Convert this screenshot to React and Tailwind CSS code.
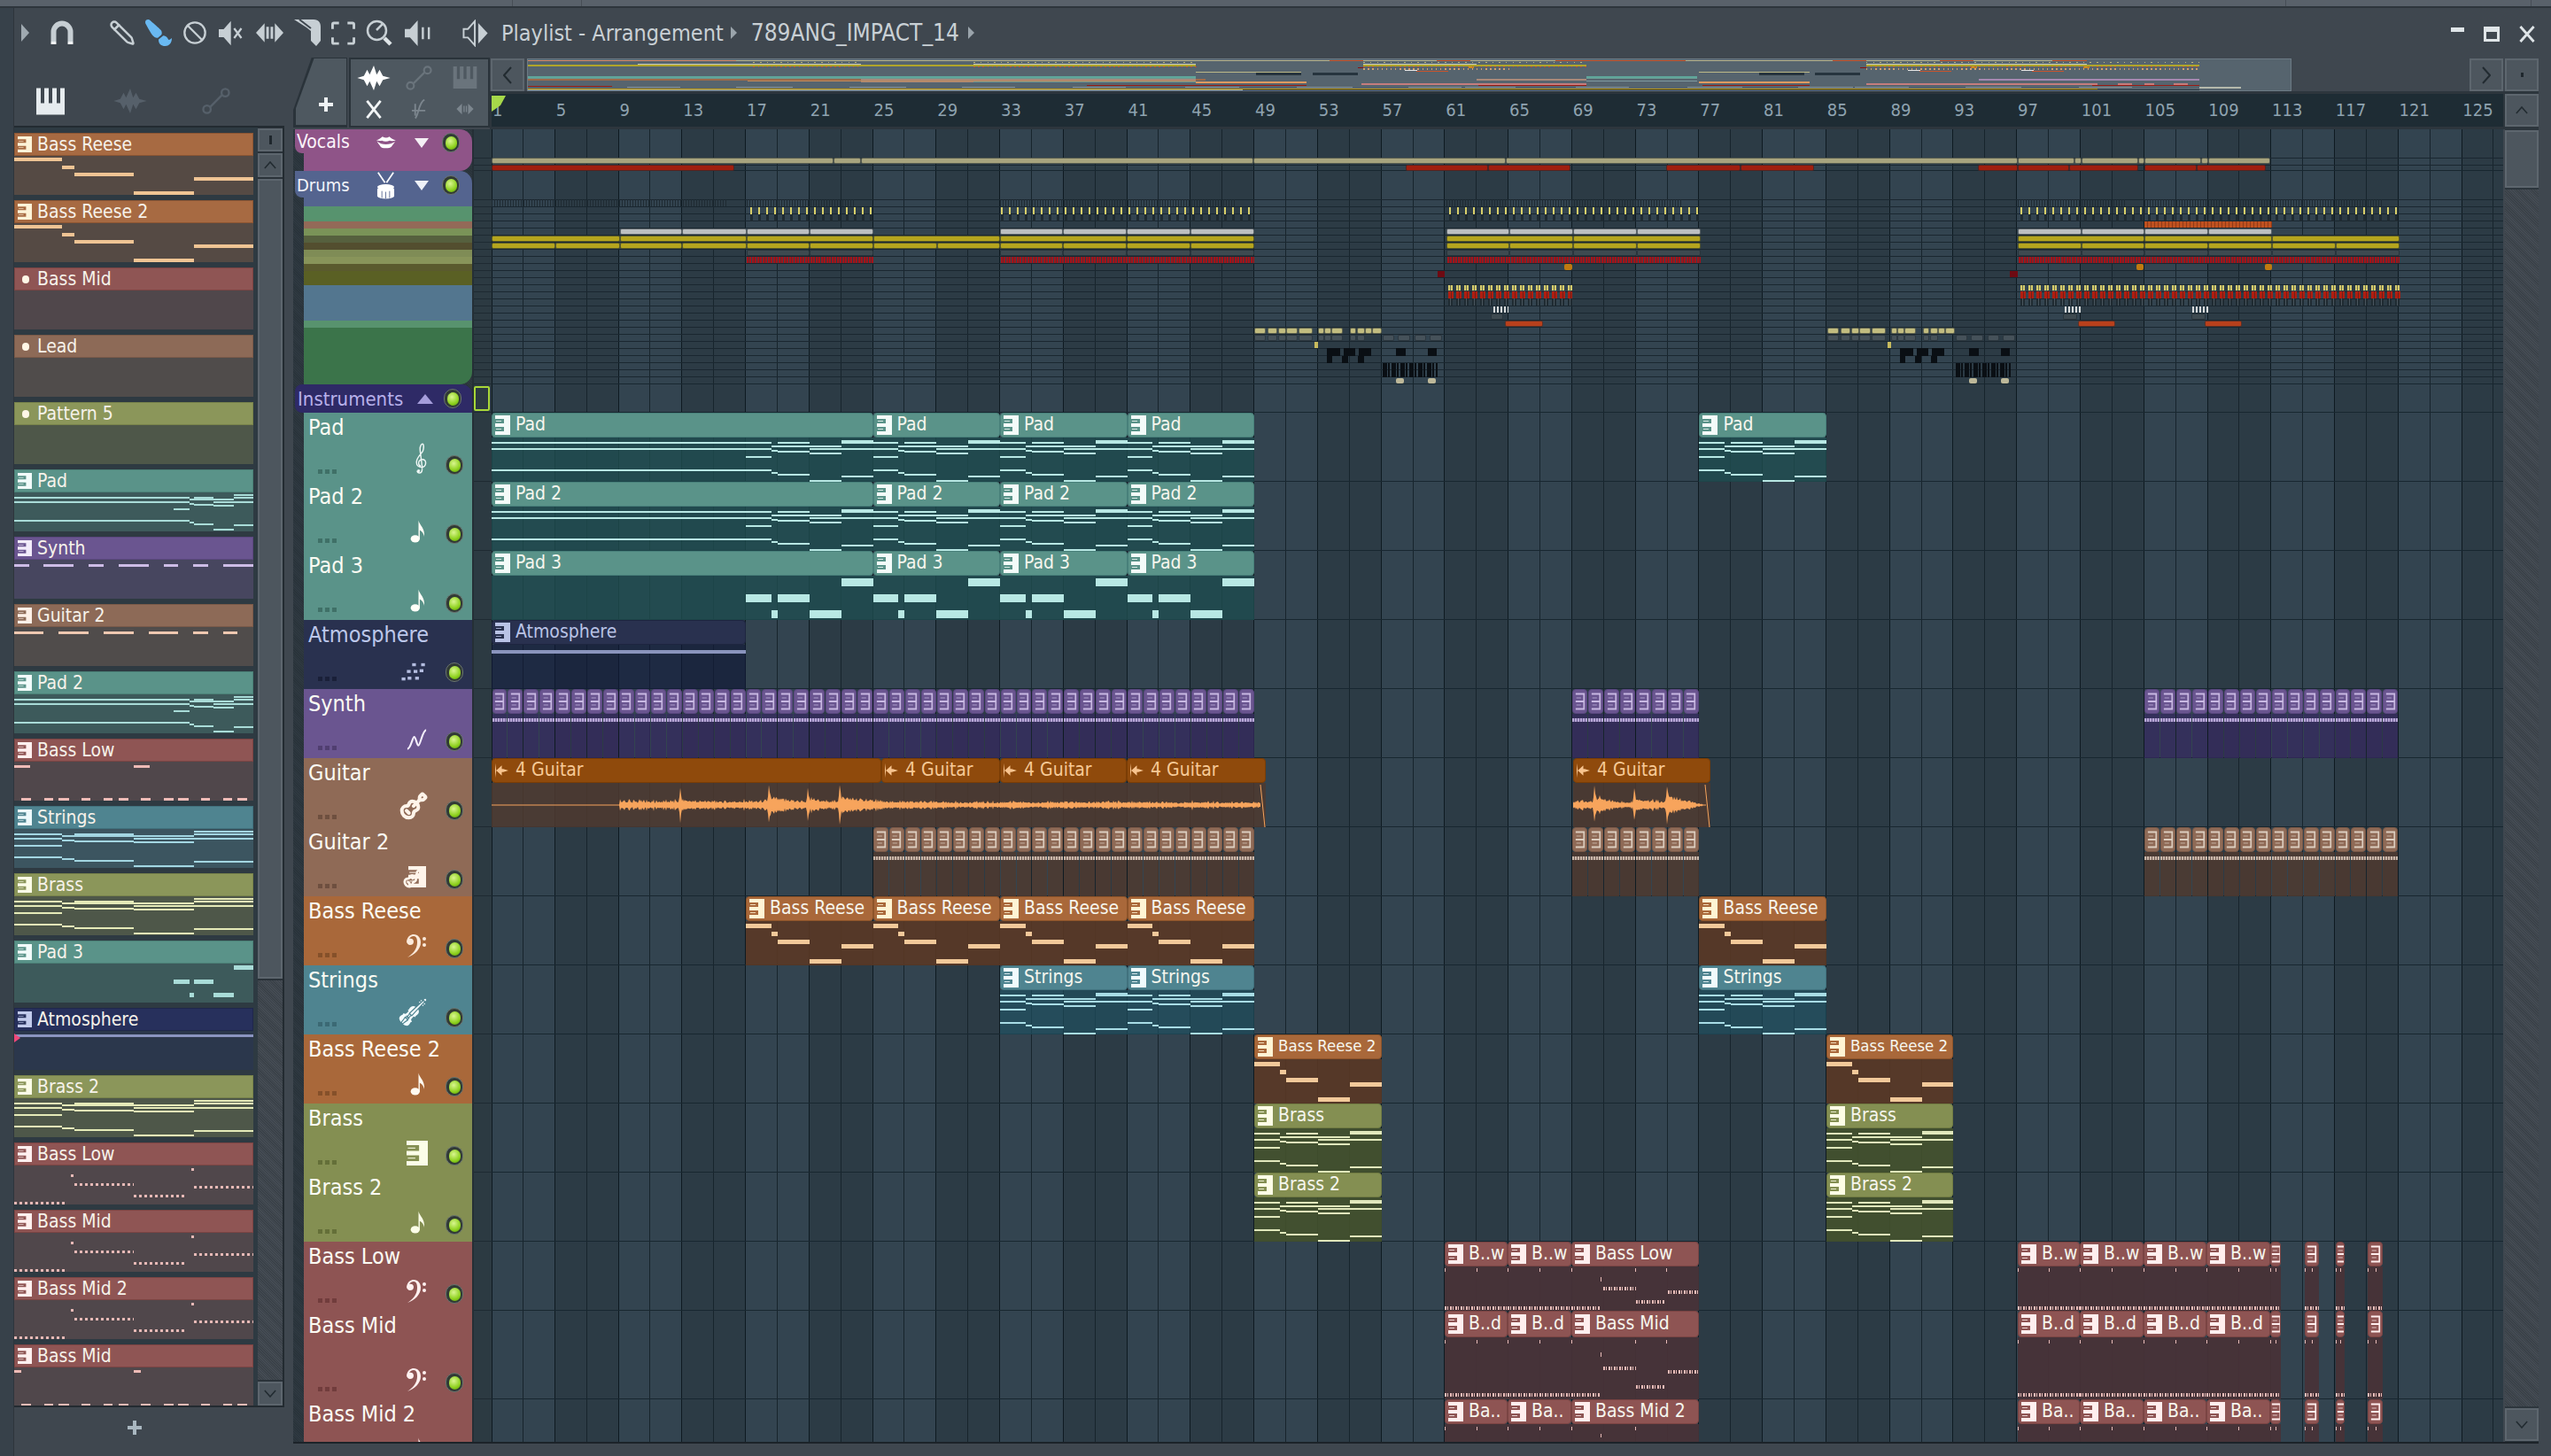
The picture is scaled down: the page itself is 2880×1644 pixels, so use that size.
import React from "react";
import { Pencil, Ban, Guitar } from "lucide-react";
import { FaPaintBrush } from "react-icons/fa";
import { GiViolin, GiLips } from "react-icons/gi";

const BAR = 17.94;
const X0 = 555;
const Y0 = 146;
const bx = (b) => X0 + (b - 1) * BAR;

/* ---------- icons ---------- */
const PianoGlyph = ({ className = "" }) => (
  <svg viewBox="0 0 17 22" className={className} preserveAspectRatio="none">
    <path fill="currentColor" d="M0 0H17V22H0V18H10V13H0V9H10V4H0Z" />
    <path fill="currentColor" opacity=".8" d="M1 6h6v1H1zM1 15h6v1H1z" />
  </svg>
);
const TinyGlyph = ({ className = "" }) => (
  <svg viewBox="0 0 14 22" className={className} preserveAspectRatio="none">
    <path fill="currentColor" d="M1 1.500H13V20.500H1V18.500H11V12H1V10H11V3.500H1Z" />
    <path fill="currentColor" opacity=".7" d="M2 6.500h6v1H2zM2 14.500h6v1H2z" />
  </svg>
);
const EighthNote = ({ className = "" }) => (
  <svg viewBox="0 0 20 30" className={className}>
    <ellipse cx="6" cy="24" rx="5.500" ry="4.500" fill="currentColor" />
    <path d="M10 24V1.500c1 6 8 9 7 20-1-5-4-7-5.500-8V24z" fill="currentColor" />
  </svg>
);
const BassClef = ({ className = "" }) => (
  <svg viewBox="0 0 26 28" className={className}>
    <path d="M2 9C3 3 7 1 10 1c5 0 8 4 8 9 0 8-7 14-15 17 6-4 11-9 11-17 0-4-1-7-4-7-2 0-4 1-5 3 2-1 5 0 5 3s-2 4-4 4-4-2-4-4z" fill="currentColor" />
    <circle cx="22" cy="6" r="2" fill="currentColor" />
    <circle cx="22" cy="13" r="2" fill="currentColor" />
  </svg>
);
const TrebleClef = ({ className = "" }) => (
  <svg viewBox="0 0 20 44" className={className} fill="none" stroke="currentColor" strokeWidth="1.800">
    <path d="M12 36C12 30 9 12 9 8s2-7 3.500-7S15 6 13 11c-2 4-9 9-9 16 0 5 4 7 7 7s6-2 6-6-3-5-5-5-5 2-5 5 2 4 3 4" />
    <path d="M12 36c0 4-1 6-4 6-2 0-3-1-3-3" />
    <circle cx="7" cy="39" r="2" fill="currentColor" stroke="none" />
  </svg>
);
const AtmoIcon = ({ className = "" }) => (
  <svg viewBox="0 0 32 26" className={className} fill="currentColor">
    <rect x="8" y="19" width="5" height="4" /><rect x="0" y="20" width="5" height="4" />
    <rect x="18" y="19" width="5" height="4" /><rect x="7" y="10" width="5" height="4" />
    <rect x="16" y="10" width="5" height="4" /><rect x="24" y="9" width="5" height="4" />
    <rect x="14" y="1" width="5" height="4" /><rect x="26" y="1" width="5" height="4" />
  </svg>
);
const SynthIcon = ({ className = "" }) => (
  <svg viewBox="0 0 26 26" className={className} fill="none" stroke="currentColor" strokeWidth="2.200">
    <path d="M2 24C6 24 8 10 10 10s3 10 5 10 5-18 9-18" />
  </svg>
);
const Wave = ({ className = "", color = "#ffffff" }) => (
  <svg viewBox="0 0 40 30" className={className}>
    <path fill={color} d="M0 15 8 12.500 12 5 15 11 20 0 23.500 11 27 5 31 12.500 40 15 31 17.500 27 25 23.500 19 20 30 15 19 12 25 8 17.500Z" />
  </svg>
);
const AutoIcon = ({ className = "" }) => (
  <svg viewBox="0 0 34 32" className={className} fill="none" stroke="currentColor" strokeWidth="2.500">
    <circle cx="6" cy="26" r="4.500" /><circle cx="28" cy="6" r="4.500" /><path d="M10 23 24 9" />
  </svg>
);
const PianoIcon = ({ className = "" }) => (
  <svg viewBox="0 0 32 30" className={className}>
    <path fill="currentColor" d="M0 0H32V30H0ZM5 0V17H9V0ZM14 0V17H18V0ZM23 0V17H27V0Z" fillRule="evenodd" />
  </svg>
);
const Speaker = ({ className = "", x, bars }) => (
  <svg viewBox="0 0 34 32" className={className} fill="currentColor">
    <path d="M0 11h6L15 1v30L6 21H0z" />
    {x && <path d="M19 10l9 12M28 10l-9 12" stroke="currentColor" strokeWidth="2.500" />}
    {bars && <path d="M21 9v14M28 9v14" stroke="currentColor" strokeWidth="2.500" />}
  </svg>
);

const TopIcons = () => (
  <>
    <svg viewBox="0 0 9 20" className="w-[9px] h-[20px] text-[#9fa9b0] ml-[8px]"><path fill="currentColor" d="M0 0 9 10 0 20Z" /></svg>
    <svg viewBox="0 0 28 28" className="w-[28px] h-[28px] ml-[23px] text-[#c7cfd4]">
      <path d="M4.500 24V13a9.500 9.500 0 0 1 19 0v11" fill="none" stroke="currentColor" strokeWidth="6" />
      <path d="M1.500 24h6v3h-6zM20.500 24h6v3h-6z" fill="#f2f5f6" />
    </svg>
    <Pencil className="w-[30px] h-[30px] ml-[39px] text-[#c7cfd4] -scale-x-100" strokeWidth={2} />
    <FaPaintBrush className="w-[30px] h-[30px] ml-[11px] text-[#69b9f2] -scale-x-100" />
    <Ban className="w-[28px] h-[28px] ml-[12px] text-[#c7cfd4]" strokeWidth={2} />
    <Speaker x className="w-[31px] h-[31px] ml-[13px] text-[#c7cfd4]" />
    <svg viewBox="0 0 32 28" className="w-[31px] h-[28px] ml-[11px] text-[#c7cfd4]">
      <path fill="currentColor" d="M0 14 10 3v22ZM32 14 22 3v22ZM12 7h3v14h-3ZM17 7h3v14h-3Z" />
    </svg>
    <svg viewBox="0 0 30 30" className="w-[30px] h-[30px] ml-[12px] text-[#c7cfd4]">
      <path fill="currentColor" d="M0 0H22C28 0 30 4 30 8V24L25 30 19 24V13L14 9 0 0ZM5 0 19 10" />
      <path d="M6 0 19 10" stroke="#3f474f" strokeWidth="2" />
    </svg>
    <svg viewBox="0 0 28 28" className="w-[27px] h-[27px] ml-[12px] text-[#c7cfd4]" fill="none" stroke="currentColor" strokeWidth="3">
      <path d="M9 2H3a1.500 1.500 0 0 0-1.500 1.500V9M19 2h6a1.500 1.500 0 0 1 1.500 1.500V9M9 26H3a1.500 1.500 0 0 1-1.500-1.500V19M19 26h6a1.500 1.500 0 0 0 1.500-1.500V19" />
    </svg>
    <svg viewBox="0 0 30 30" className="w-[30px] h-[30px] ml-[12px] text-[#c7cfd4]" fill="none" stroke="currentColor">
      <circle cx="12.500" cy="12.500" r="10.500" strokeWidth="2.500" />
      <path d="M12 12 19 5" strokeWidth="2.500" /><path d="M21 21 28 28" strokeWidth="4.500" stroke="#dfe5e8" />
    </svg>
    <Speaker bars className="w-[33px] h-[31px] ml-[14px] text-[#c7cfd4]" />
    <svg viewBox="0 0 30 32" className="w-[30px] h-[31px] ml-[32px] text-[#c7cfd4]" fill="none" stroke="currentColor" strokeWidth="2">
      <path d="M1 11h5L14 2v28L6 21H1z" /><path fill="currentColor" stroke="none" d="M18 4 29 16 18 28Z" />
    </svg>
  </>
);

const Led = ({ className = "" }) => (
  <div className={"w-[20px] h-[22px] rounded-full bg-[#313a35] border border-[#6a7470] flex items-center justify-center shrink-0 " + className}>
    <div className="w-[13px] h-[15px] rounded-full bg-[radial-gradient(circle_at_40%_35%,#d9f58f,#8ed11e_60%,#4f8f0c)]" />
  </div>
);

/* ---------- note patterns ---------- */
const padSeg = [
  [0, 1.6, [5.3, 12, 21, 36]],
  [1.6, 2, [8.7, 14.3, 39.3]],
  [2, 4, [5.3, 8.7, 15.3, 41.3]],
  [4, 6, [8.7, 12, 17, 47.7]],
  [6, 8, [2.7, 5.3, 12, 42.7]],
];
const pad8 = padSeg.flatMap(([a, b, ys]) => ys.map((y) => [a / 8, b / 8, y]));
const pad24 = [
  ...[5.3, 12, 36].map((y) => [0, 16 / 24, y]),
  ...padSeg.flatMap(([a, b, ys]) => ys.map((y) => [(16 + a) / 24, (16 + b) / 24, y])),
];
const reese8 = [[0, 0.2, 2.7], [0.2, 0.25, 11.7], [0.25, 0.5, 21], [0.5, 0.75, 43.3], [0.75, 1, 25.7]];
const pad3_8 = [[0, 0.2, 20.7], [0.25, 0.5, 20.7], [0.2, 0.25, 39], [0.5, 0.75, 39], [0.75, 1, 2.7]];
const pad3_24 = pad3_8.map(([a, b, y]) => [(16 + a * 8) / 24, (16 + b * 8) / 24, y]);

const Notes = ({ notes, h = 2, color = "bg-[#b8e8e4]", k = 1 }) => (
  <>
    {notes.map(([a, b, y], i) => (
      <div key={i} className={"absolute " + color} style={{ left: a * 100 + "%", width: (b - a) * 100 + "%", top: Math.round(y * k), height: h }} />
    ))}
  </>
);

/* ---------- picker ---------- */
const P = {
  reese: ["bg-[#a76a42] border-[#8b5533]", "bg-[#554a44]", "bg-[#efc494]", "text-[#fdf3d8]"],
  mid: ["bg-[#8f5554] border-[#7c4443]", "bg-[#50474b]", "bg-[#eebbb6]", "text-[#fff0ef]"],
  lead: ["bg-[#8d6a57] border-[#7a5a49]", "bg-[#504c4b]", "bg-[#efc8b0]", "text-[#fdf0e8]"],
  olive: ["bg-[#8b965a] border-[#78834b]", "bg-[#4e5749]", "bg-[#e5eab8]", "text-[#fbfce8]"],
  pad: ["bg-[#5a9389] border-[#4b8177]", "bg-[#3d5a5b]", "bg-[#a9dcd8]", "text-[#f1fbfa]"],
  synth: ["bg-[#6a5590] border-[#5b477e]", "bg-[#47465f]", "bg-[#cdbce6]", "text-[#f2ecfb]"],
  str: ["bg-[#4f8490] border-[#41727e]", "bg-[#3c5560]", "bg-[#a3d6e2]", "text-[#edf9fc]"],
  atm: ["bg-[#27305c] border-[#1f274c]", "bg-[#2b374c]", "bg-[#8a94c0]", "text-[#c2cbec]"],
};
const dots = "bg-[repeating-linear-gradient(90deg,#e6b9b6_0_3px,transparent_3px_6px)]";
const synthMini = [[0, .063], [.124, .25], [.31, .375], [.437, .562], [.625, .687], [.749, .81], [.873, 1]].map(([a, b]) => [a, b, 5]);
const guitMini = [[0, .124], [.187, .31], [.375, .5], [.562, .687], [.749, .81], [.873, .935]].map(([a, b]) => [a, b, 5]);
const lowMini = [[.03, .07], [.125, .163], [.187, .23], [.28, .318], [.374, .41], [.437, .476], [.53, .57], [.626, .666], [.687, .73], [.78, .818], [.873, .91], [.935, .975]].map(([a, b]) => [a, b, 41]);
const bassMini = [
  [0, .217, 41], [.237, .25, 10], [.25, .5, 20], [.5, .72, 33], [.742, .755, 3], [.75, 1, 23],
];

const pickerItems = [
  { n: "Bass Reese", t: P.reese, notes: reese8.map(([a, b, y]) => [a, b, y * 0.92]), h: 4 },
  { n: "Bass Reese 2", t: P.reese, notes: reese8.map(([a, b, y]) => [a, b, y * 0.92]), h: 4 },
  { n: "Bass Mid", t: P.mid, dot: 1 },
  { n: "Lead", t: P.lead, dot: 1 },
  { n: "Pattern 5", t: P.olive, dot: 1 },
  { n: "Pad", t: P.pad, notes: pad24.map(([a, b, y]) => [a, b, y * 0.85]) },
  { n: "Synth", t: P.synth, notes: synthMini, h: 3 },
  { n: "Guitar 2", t: P.lead, notes: guitMini, h: 3 },
  { n: "Pad 2", t: P.pad, notes: pad24.map(([a, b, y]) => [a, b, y * 0.85]) },
  { n: "Bass Low", t: P.mid, notes: [...lowMini, [0, .065, 4], [.5, .565, 4]], h: 3 },
  { n: "Strings", t: P.str, notes: pad8.map(([a, b, y]) => [a, b, y * 0.85]) },
  { n: "Brass", t: P.olive, notes: pad8.map(([a, b, y]) => [a, b, y * 0.85]) },
  { n: "Pad 3", t: P.pad, notes: pad3_24.map(([a, b, y]) => [a, b, y * 0.85]), h: 5 },
  { n: "Atmosphere", t: P.atm, notes: [[0, 1, 4]], h: 3, flag: 1 },
  { n: "Brass 2", t: P.olive, notes: pad8.map(([a, b, y]) => [a, b, y * 0.85]) },
  { n: "Bass Low", t: P.mid, dotted: 1 },
  { n: "Bass Mid", t: P.mid, dotted: 1 },
  { n: "Bass Mid 2", t: P.mid, dotted: 1 },
  { n: "Bass Mid", t: P.mid, notes: [...lowMini, [0, .03, 3], [.5, .53, 3]], h: 3 },
];

const PickerItem = ({ it }) => (
  <div className="w-[270px] h-[70px] flex flex-col shrink-0">
    <div className={"h-[26px] border flex items-center shrink-0 " + it.t[0]}>
      {it.dot ? (
        <span className="w-[8px] h-[9px] rounded-full bg-[#fff6e6] ml-[8px] mr-[9px]" />
      ) : (
        <PianoGlyph className={"w-[16px] h-[18px] ml-[3px] mr-[6px] " + it.t[3]} />
      )}
      <span className="text-[21px] leading-none text-[#f6f2ea]">{it.n}</span>
    </div>
    <div className={"flex-1 relative overflow-hidden " + it.t[1]}>
      {it.notes && <Notes notes={it.notes} h={it.h || 2} color={it.t[2]} />}
      {it.dotted && bassMini.map(([a, b, y], i) => (
        <div key={i} className={"absolute h-[3px] " + dots} style={{ left: a * 100 + "%", width: (b - a) * 100 + "%", top: y }} />
      ))}
      {it.flag && <div className="absolute left-0 top-[3px] w-0 h-0 border-y-[5px] border-y-transparent border-l-[7px] border-l-[#f0487a]" />}
    </div>
  </div>
);

const ScrollBtn = ({ children, className = "" }) => (
  <div className={"bg-[#4d565e] border-2 border-[#5d666e] flex items-center justify-center text-[#1f272d] shrink-0 " + className}>{children}</div>
);
const Chev = ({ dir }) => (
  <svg viewBox="0 0 16 10" className="w-[14px] h-[9px]" fill="none" stroke="#222b31" strokeWidth="1.800">
    <path d={dir === "up" ? "M1 9 8 1l7 8" : "M1 1l7 8 7-8"} />
  </svg>
);

/* ---------- tracks ---------- */
const tracks = [
  { n: "Pad", c: "bg-[#5a9389]", d: "bg-[#3f7067]", ic: <TrebleClef className="w-[16px] h-[36px] text-[#eef7f5]" /> },
  { n: "Pad 2", c: "bg-[#5a9389]", d: "bg-[#3f7067]", ic: <EighthNote className="w-[21px] h-[28px] text-[#fffff8]" /> },
  { n: "Pad 3", c: "bg-[#5a9389]", d: "bg-[#3f7067]", ic: <EighthNote className="w-[21px] h-[28px] text-[#fffff8]" /> },
  { n: "Atmosphere", c: "bg-[#29314f]", d: "bg-[#1a2038]", tx: "text-[#bcc7ea]", ic: <AtmoIcon className="w-[32px] h-[22px] text-[#b4bde0]" /> },
  { n: "Synth", c: "bg-[#6a5590]", d: "bg-[#503e70]", ic: <SynthIcon className="w-[25px] h-[26px] text-[#f4eefc]" /> },
  { n: "Guitar", c: "bg-[#8f6a56]", d: "bg-[#6e4f3f]", ic: <Guitar className="w-[32px] h-[32px] text-[#fff4ea]" strokeWidth={3} /> },
  { n: "Guitar 2", c: "bg-[#8f6a56]", d: "bg-[#6e4f3f]", ic: <div className="relative w-[28px] h-[26px]"><PianoGlyph className="w-[20px] h-[24px] text-[#fff4ea] absolute left-[6px]" /><Guitar className="w-[22px] h-[22px] absolute left-0 top-[3px] text-[#fff4ea]" strokeWidth={3} /></div> },
  { n: "Bass Reese", c: "bg-[#a9683a]", d: "bg-[#85502a]", ic: <BassClef className="w-[26px] h-[28px] text-[#fbeadb]" /> },
  { n: "Strings", c: "bg-[#4f8490]", d: "bg-[#3b6974]", ic: <GiViolin className="w-[34px] h-[34px] text-[#f2fbfd]" /> },
  { n: "Bass Reese 2", c: "bg-[#a9683a]", d: "bg-[#85502a]", ic: <EighthNote className="w-[21px] h-[28px] text-[#fffaf0]" /> },
  { n: "Brass", c: "bg-[#848f52]", d: "bg-[#646f38]", ic: <PianoGlyph className="w-[24px] h-[28px] text-[#fbfde8]" /> },
  { n: "Brass 2", c: "bg-[#848f52]", d: "bg-[#646f38]", ic: <EighthNote className="w-[21px] h-[28px] text-[#fbfde8]" /> },
  { n: "Bass Low", c: "bg-[#8e5453]", d: "bg-[#713c3c]", ic: <BassClef className="w-[26px] h-[28px] text-[#fff0ef]" /> },
  { n: "Bass Mid", c: "bg-[#8e5453]", d: "bg-[#713c3c]", tall: 1, ic: <BassClef className="w-[26px] h-[28px] text-[#fff0ef]" /> },
  { n: "Bass Mid 2", c: "bg-[#8e5453]", d: "bg-[#713c3c]", ic: <EighthNote className="w-[21px] h-[28px] text-[#fff0ef]" /> },
];

const TrackHead = ({ t }) => (
  <div className={"relative shrink-0 ml-[12px] flex flex-col " + t.c + " " + (t.tall ? "h-[100px]" : "h-[78px]")}>
    <div className={"pl-[5px] pt-[3px] text-[25px] leading-[28px] whitespace-nowrap " + (t.tx || "text-[#fbfbf3]")}>{t.n}</div>
    <div className="flex-1" />
    <div className="flex items-end justify-between pb-[8px] pr-[10px] pl-[16px]">
      <div className="flex gap-[3px] mb-[1px]">
        <span className={"w-[5px] h-[5px] " + t.d} /><span className={"w-[5px] h-[5px] " + t.d} /><span className={"w-[5px] h-[5px] " + t.d} />
      </div>
      <div className="flex-1 flex justify-end items-end pr-[20px]">{t.ic}</div>
      <Led />
    </div>
  </div>
);

const heads = (
  <div className="w-[202px] h-full flex flex-col overflow-hidden bg-[repeating-linear-gradient(45deg,#29333a_0_1px,#2f3941_1px_2px)] shrink-0">
    <div className="h-[47px] shrink-0 bg-[#8f5488] rounded-r-[14px] ml-[12px] relative">
      <div className="absolute -left-[10px] top-0 w-[12px] h-[27px] bg-[#8f5488] rounded-bl-[8px]" />
      <div className="absolute inset-x-0 top-0 -ml-[8px] h-[30px] flex items-center text-[21px] text-[#fbf3fa]">
        Vocals
        <GiLips className="w-[24px] h-[24px] absolute left-[89px] text-white" />
        <span className="absolute left-[133px] w-0 h-0 border-x-[8px] border-x-transparent border-t-[11px] border-t-[#f5eff5]" />
        <Led className="absolute left-[164px]" />
      </div>
    </div>
    <div className="h-[241px] shrink-0 ml-[12px] flex flex-col relative">
      <div className="absolute -left-[10px] top-0 w-[12px] h-[30px] bg-[#54648f] rounded-bl-[8px]" />
      <div className="h-[40px] bg-[#54648f] relative rounded-tr-[14px]">
        <div className="absolute inset-x-0 top-0 h-[32px] flex items-center text-[20px] text-[#f3f5fb]">
          <span className="-ml-[8px]">Drums</span>
          <svg viewBox="0 0 26 38" className="absolute left-[80px] top-[1px] w-[25px] h-[33px] text-white">
            <path d="M3 1l9 13M23 1 14 14" stroke="currentColor" strokeWidth="2" />
            <ellipse cx="13" cy="20" rx="11" ry="4" fill="currentColor" />
            <path fill="currentColor" d="M2 22h22v10c-3 4-19 4-22 0z" />
            <path d="M8 25v9M13 26v9M18 25v9" stroke="#54648f" />
          </svg>
          <span className="absolute left-[125px] w-0 h-0 border-x-[8px] border-x-transparent border-t-[11px] border-t-[#eef1f8]" />
          <Led className="absolute left-[156px]" />
        </div>
      </div>
      {["h-[17px] bg-[#57936e]", "h-[8px] bg-[#936a58]", "h-[8px] bg-[#7a9358]", "h-[8px] bg-[#56603e]", "h-[8px] bg-[#534e2f]", "h-[8px] bg-[#7f8c56]", "h-[8px] bg-[#88945a]", "h-[8px] bg-[#5a5a2e]", "h-[16px] bg-[#5a6024]", "h-[40px] bg-[#53768f]", "h-[8px] bg-[#58936e]", "flex-1 bg-[#3b744a] rounded-br-[14px]"].map((c, i) => (
        <div key={i} className={c} />
      ))}
    </div>
    <div className="h-[32px] shrink-0 bg-[#2e2a66] rounded-tr-[12px] rounded-l-[8px] ml-[2px] flex items-center relative text-[22px] text-[#b8b0ea] pl-[3px]">
      Instruments
      <span className="absolute left-[138px] w-0 h-0 border-x-[9px] border-x-transparent border-b-[11px] border-b-[#a59ddb]" />
      <Led className="absolute left-[168px]" />
    </div>
    {tracks.map((t, i) => <TrackHead key={i} t={t} />)}
  </div>
);

/* ---------- clips ---------- */
const T = {
  pad: { h: "bg-[#5a9389] border-[#48807a]", b: "bg-[#1f4e50]/80", n: "bg-[#b8e8e4]", i: "text-[#f3fbf9]" },
  atm: { h: "bg-[#29314f] border-[#1e2540]", b: "bg-[#10193a]/60", n: "bg-[#8a94bd]", i: "text-[#b9c3e6]", tx: "text-[#b9c3e6]" },
  synth: { h: "bg-[#6a5590] border-[#5a4780]", b: "bg-[#352a5f]/75", n: "", i: "text-[#c8b8e2]" },
  guit2: { h: "bg-[#8f6a56] border-[#7a5948]", b: "bg-[#4f3a2f]/85", n: "", i: "text-[#dccdbf]" },
  guit: { h: "bg-[#8f4a0c] border-[#7a3d05]", b: "bg-[#4f3a2f]/85", n: "", i: "text-[#f8c48f]", tx: "text-[#f7c996]" },
  reese: { h: "bg-[#a9683a] border-[#8e5429]", b: "bg-[#5a3825]/90", n: "bg-[#f2c99a]", i: "text-[#fff4d4]" },
  str: { h: "bg-[#4f8490] border-[#41727e]", b: "bg-[#1f5060]/70", n: "bg-[#a9dde6]", i: "text-[#f0fbfd]" },
  brass: { h: "bg-[#848f52] border-[#717c43]", b: "bg-[#44522c]/90", n: "bg-[#e1e8bc]", i: "text-[#fdfde6]" },
  bass: { h: "bg-[#8e5453] border-[#7a4443]", b: "bg-[#483338]/95", n: "", i: "text-[#ffeeee]" },
};

const Clip = ({ x0, x1, top, t, label, notes, nh = 2, bottom = 78, tiny, audio, hh = 28, small, children }) => (
  <div className="absolute" style={{ left: x0 - X0, width: x1 - x0, top: top - Y0, height: bottom }}>
    <div className={"relative border rounded-[4px] flex items-center overflow-hidden z-10 " + t.h} style={{ height: hh }}>
      {audio ? (
        <svg viewBox="0 0 18 20" className={"w-[15px] h-[18px] ml-[3px] mr-[8px] shrink-0 " + t.i}>
          <path fill="currentColor" d="M0 0v20l1.500-10L9 17V12l2 0L18 10 11 8 9 8V3L1.500 10Z" />
        </svg>
      ) : tiny ? (
        <TinyGlyph className={"shrink-0 w-[12px] h-[22px] mx-auto " + t.i} />
      ) : (
        <PianoGlyph className={"shrink-0 w-[17px] h-[22px] ml-[3px] mr-[6px] " + t.i} />
      )}
      {!tiny && <span className={(small ? "text-[18.5px]" : "text-[21px]") + " leading-none whitespace-nowrap -mt-[1px] " + (t.tx || "text-[#f6f6ee]")}>{label}</span>}
    </div>
    <div className={"absolute left-0 right-0 " + t.b} style={{ top: hh, bottom: 0 }}>
      {notes && <Notes notes={notes} h={nh} color={t.n} />}
      {children}
    </div>
  </div>
);

const rowTop = { pad: 466, pad2: 544, pad3: 622, atm: 700, synth: 778, guit: 856, guit2: 934, reese: 1012, str: 1090, reese2: 1168, brass: 1246, brass2: 1324, low: 1402, mid: 1480, mid2: 1580 };

const pairs = (arr) => arr.slice(0, -1).map((v, i) => [v, arr[i + 1]]);

const noiseAt = (i) => {
  const s = Math.sin(i * 12.9898) * 43758.5453;
  return s - Math.floor(s);
};
const wavePath = (w, spikes, flat, baseFn, tail) => {
  const top = [];
  const bot = [];
  for (let x = 0; x <= w; x++) {
    let a = 0;
    if (x >= flat) {
      a = baseFn(x) * (0.3 + 0.8 * noiseAt(x) * noiseAt(x + 11) + 0.3 * noiseAt(x + 5));
      spikes.forEach(([p, tip, amp, decay]) => {
        if (x >= p - 1 && x <= p + 1) a = Math.max(a, tip * (x === p ? 1 : 0.55));
        if (x >= p) a += amp * Math.exp(-(x - p) / decay) * (0.5 + 0.5 * noiseAt(x + 7));
      });
      if (tail && x > w - 25) a *= (w - x) / 25;
    }
    a = Math.max(0.5, a);
    top.push(x + " " + (25 - a).toFixed(1));
    bot.unshift(x + " " + (25 + a * (0.85 + 0.2 * noiseAt(x + 3))).toFixed(1));
  }
  return "M" + top.join("L") + "L" + bot.join("L") + "Z";
};

const synthDash = "absolute left-0 right-0 top-[5px] h-[4px] bg-[repeating-linear-gradient(90deg,#b7a7d6_0_2px,#6d5f95_2px_3px)]";
const g2Dash = "absolute left-0 right-0 top-[5px] h-[4px] bg-[repeating-linear-gradient(90deg,#c9b6a8_0_2px,#75615a_2px_3px)]";

const barClips = (from, to, step, fn) => {
  const out = [];
  for (let b = from; b < to; b += step) out.push(fn(b));
  return out;
};

const bodyDots = "absolute h-[4px] bg-[repeating-linear-gradient(90deg,#e9bdb9_0_2px,transparent_2px_3px,#e9bdb9_3px_4px,transparent_4px_6px)]";

const BassBody = ({ full, y0 }) => {
  const [tick, btm, ny] = y0;
  return (
    <>
      <div className="absolute left-0 w-[1px] bg-[#e9bdb9]" style={{ top: tick, height: 4 }} />
      <div className="absolute left-1/2 w-[1px] bg-[#e9bdb9]" style={{ top: tick, height: 4 }} />
      {btm != null && <div className={bodyDots} style={{ left: 0, right: full ? "auto" : 0, width: full ? 32 : undefined, top: btm }} />}
      {full && ny && (
        <>
          <div className="absolute w-[1px] h-[5px] bg-[#e9bdb9]" style={{ left: 33, top: ny[3] }} />
          <div className={bodyDots} style={{ left: 36, width: 37, top: ny[0] }} />
          <div className={bodyDots} style={{ left: 73, width: 32, top: ny[1] }} />
          <div className={bodyDots} style={{ left: 109, width: 35, top: ny[2] }} />
          <div className="absolute w-[1px] bg-[#e9bdb9] right-[36px]" style={{ top: tick, height: 4 }} />
        </>
      )}
      {full && !ny && <div className="absolute w-[1px] h-[4px] bg-[#e9bdb9]" style={{ left: 33, top: tick + 8 }} />}
    </>
  );
};

const bassGroup = (top, labelShort, label, bottom, y0, hh) => {
  const s = (x0, x1, tiny, lab, full) => (
    <Clip key={x0 + "" + x1} x0={x0} x1={x1} top={top} t={T.bass} label={lab} tiny={tiny} bottom={bottom} hh={hh}>
      <BassBody full={full} y0={y0} />
    </Clip>
  );
  return [
    s(1631, 1702, 0, labelShort), s(1702, 1774, 0, labelShort), s(1774, 1918, 0, label, 1),
    s(2278, 2348, 0, labelShort), s(2348, 2420, 0, labelShort), s(2420, 2491, 0, labelShort), s(2491, 2563, 0, labelShort),
    s(2563, 2575, 1), s(2602, 2618, 1), s(2637, 2647, 1), s(2673, 2690, 1),
  ];
};

const pill = "rounded-[2px] border border-[#1c282e]/60";
const TAN = "bg-[#a8a47e] " + pill;
const RED = "bg-[#a01f0f] " + pill;
const YEL = "bg-[#b5a51e] " + pill;
const WHT = "bg-[#bcbfc1] " + pill;
const GRY = "bg-[#3e4a50] " + pill;
const ORG = "bg-[#b8401c] " + pill;
const SAND = "bg-[#c2bc80] " + pill;
const GR2 = "bg-[#46525a] " + pill;
const pinY = "bg-[repeating-linear-gradient(90deg,#d8cf6a_0_2px,transparent_2px_9px)]";
const pinG = "bg-[repeating-linear-gradient(90deg,#1f2b32_0_3px,transparent_3px_9px)]";
const combR = "bg-[repeating-linear-gradient(90deg,#a3131a_0_2px,#5f2a30_2px_3px,#a3131a_3px_5px,transparent_5px_6px)]";
const dashD = "bg-[repeating-linear-gradient(90deg,#1f2b33_0_1px,transparent_1px_3px)]";
const pinD = "bg-[repeating-linear-gradient(90deg,#d4cb6c_0_2px,#6b6e4f_2px_3px,#d4cb6c_3px_5px,transparent_5px_9px)]";
const combD = "bg-[repeating-linear-gradient(90deg,#b01d10_0_3px,#702017_3px_4px,#b01d10_4px_6px,transparent_6px_9px)]";
const pinD2 = "bg-[repeating-linear-gradient(90deg,#1f2b32_0_2px,#4a565e_2px_3px,#1f2b32_3px_5px,transparent_5px_9px)]";
const blackBar = "bg-[repeating-linear-gradient(90deg,#0a0f14_0_5px,transparent_5px_6px,#0a0f14_6px_8px,transparent_8px_10px)]";

const secs = [[1416, 0], [2063, 1]];
const tr = (arr) => secs.flatMap(([o]) => arr.map(([a, b]) => [a - 1416 + o, b - 1416 + o]));

const lanes = [
  [178, 185, TAN, pairs([555, 941, 972, 1415, 1700, 2278, 2342, 2350, 2414, 2421, 2485, 2493, 2563])],
  [186, 193, RED, [[555, 829], [1587, 1680], [1680, 1773], [1881, 1965], [1965, 2048], [2233, 2278], [2278, 2336], [2336, 2414], [2421, 2480], [2480, 2558]]],
  [225, 233, dashD, [[555, 821], [843, 965], [1129, 1395], [1633, 1900], [2278, 2400], [2421, 2690]]],
  [234, 242, pinY, [[847, 986], [1130, 1416], [1636, 1920], [2281, 2709]]],
  [242, 250, pinG, [[847, 986], [1130, 1416], [1636, 1920], [2281, 2709]]],
  [250, 257, "bg-[repeating-linear-gradient(90deg,#c0511f_0_3px,#8f3a18_3px_4px)]", [[2421, 2565]]],
  [258, 265, WHT, pairs([700, 770, 843, 914, 986]).concat(pairs([1129, 1200, 1272, 1344, 1416]), pairs([1633, 1704, 1776, 1848, 1920]), pairs([2278, 2350, 2421, 2493, 2565]))],
  [266, 273, YEL, pairs([555, 700, 843, 986, 1129, 1272, 1416]).concat(pairs([1633, 1776, 1920]), pairs([2278, 2421, 2565, 2709]))],
  [274, 281, YEL, pairs([555, 627, 700, 770, 843, 914, 986, 1058, 1129, 1200, 1272, 1344, 1416]).concat(pairs([1633, 1704, 1776, 1848, 1920]), pairs([2278, 2350, 2421, 2493, 2565, 2637, 2709]))],
  [282, 289, GRY, pairs([843, 914, 986]).concat(pairs([1129, 1200, 1272, 1344, 1416]), pairs([1633, 1704, 1776, 1848, 1920]), pairs([2278, 2350, 2421, 2493, 2565, 2637, 2709]))],
  [290, 297, combR, [[843, 986], [1130, 1416], [1634, 1920], [2279, 2709]]],
  [298, 305, "bg-[#c07a10] rounded-[2px]", [[1766, 1775], [2412, 2420], [2557, 2565]]],
  [306, 313, "bg-[#6e0a12]", [[1623, 1631], [2269, 2278]]],
  [322, 328, pinD, [[1635, 1775], [2281, 2710]]],
  [329, 337, combD, [[1635, 1775], [2281, 2710]]],
  [337, 345, pinD2, [[1635, 1775], [2281, 2710]]],
  [346, 353, "bg-[repeating-linear-gradient(90deg,#d9dcdc_0_2px,transparent_2px_4px)]", [[1686, 1703], [2331, 2350], [2475, 2493]]],
  [354, 361, GRY, [[1683, 1697], [2329, 2345], [2474, 2490]]],
  [362, 369, ORG, [[1699, 1742], [2346, 2388], [2489, 2531]]],
  [370, 377, SAND, tr([[1416, 1429], [1431, 1442], [1443, 1452], [1452, 1465], [1466, 1482], [1488, 1495], [1495, 1503], [1503, 1516], [1524, 1531], [1532, 1541], [1541, 1549], [1549, 1560]])],
  [378, 385, GR2, tr([[1416, 1429], [1431, 1442], [1443, 1452], [1452, 1465], [1466, 1482], [1488, 1495], [1495, 1503], [1503, 1516], [1524, 1531], [1532, 1541], [1561, 1574], [1578, 1592], [1597, 1610], [1614, 1628]])],
  [386, 393, "bg-[#c8bb5e]", tr([[1484, 1488]])],
  [393, 402, "bg-[#0a0f14]", tr([[1498, 1513], [1517, 1530], [1534, 1548], [1576, 1587], [1612, 1622]])],
  [402, 410, "bg-[#0a0f14]", tr([[1498, 1504], [1515, 1522], [1533, 1540]])],
  [410, 426, blackBar, tr([[1561, 1623]])],
  [427, 433, "bg-[#bdb899] rounded-[2px]", tr([[1576, 1585], [1612, 1621]])],
];

/* ---------- overview ---------- */
const ox = (i) => i / 0.784 - 6;
const oy = (y) => y / 3 - 6;
const ov = [
  [25, 28, "#d98a6a", [[5, 190]]],
  [24, 27, "#b8b48e", [[190, 1385]]],
  [24, 27, "#c9542c", [[715, 745], [810, 840], [915, 1030], [1160, 1190], [1255, 1285], [1355, 1385]]],
  [39, 44, "#b0a52a", [[5, 597], [745, 942], [1190, 1485]]],
  [36, 40, "#c9ccbd", [[103, 300], [400, 597], [745, 845], [1190, 1385]]],
  [46, 50, "#c98a20", [[838, 843], [1283, 1288], [1382, 1388]]],
  [48, 51, "#8a1010", [[740, 745], [1185, 1190]]],
  [58, 60, "#e6e6e6", [[782, 793], [1227, 1238], [1327, 1338]]],
  [60, 63, "#c9542c", [[792, 820], [1237, 1265], [1337, 1365]]],
  [63, 66, "#bdb988", [[597, 690], [1042, 1140]]],
  [66, 76, "#26343e", [[650, 690], [700, 740], [1095, 1135], [1145, 1185]]],
  [79, 84, "#5fa69b", [[5, 597], [942, 1040]]],
  [84, 88, "#6a9a92", [[5, 597], [942, 1040]]],
  [88, 93, "#9c6a4a", [[5, 300], [597, 605]]],
  [88, 93, "#a98a7a", [[300, 597], [845, 942]]],
  [88, 93, "#a588b2", [[1290, 1485]]],
  [93, 97, "#c08a5a", [[200, 597]]],
  [93, 97, "#7f9aa0", [[942, 1040]]],
  [96, 102, "#e09a60", [[597, 695], [1042, 1140]]],
  [96, 100, "#a98a7a", [[300, 400]]],
  [96, 100, "#6a9a98", [[400, 597]]],
  [101, 107, "#c47d7d", [[743, 942], [1190, 1395], [1413, 1425], [1436, 1445], [1462, 1475]]],
  [108, 111, "#9a1c14", [[500, 695], [847, 942], [1045, 1140], [1390, 1485]]],
  [111, 114, "#9a1c14", [[5, 80]]],
  [114, 117, "#8a9598", [[93, 140], [190, 240], [290, 340], [390, 437], [488, 535], [587, 635], [686, 735], [785, 832], [835, 880], [933, 980], [1032, 1080], [1130, 1178], [1180, 1228], [1278, 1327], [1378, 1425]]],
  [114, 120, "#b5b9ac", [[1485, 1522]]],
  [120, 124, "#c29a10", [[5, 1395]]],
  [123, 127, "#26343e", [[638, 1485]]],
  [124, 128, "#97a296", [[5, 638]]],
];
const ovPins = [
  [30, 34, "#bdb67e", 6, [[205, 300], [400, 597], [745, 942], [1190, 1485]]],
  [44, 46, "#b34a3a", 4, [[205, 300], [400, 597], [745, 942], [1190, 1485]]],
  [52, 56, "#d2a070", 4, [[745, 875], [1190, 1485]]],
];

const Overview = () => (
  <svg viewBox="0 0 1992 37" className="block w-[1992px] h-[37px]" shapeRendering="crispEdges">
    <rect width="1992" height="37" fill="#56646e" />
    {ov.flatMap(([y0, y1, c, xs], i) =>
      xs.map(([a, b], j) => <rect key={i + "-" + j} x={ox(a)} width={(b - a) / 0.784} y={oy(y0)} height={Math.max(1, (y1 - y0) / 3)} fill={c} />)
    )}
    {ovPins.flatMap(([y0, y1, c, st, xs], i) =>
      xs.flatMap(([a, b], j) => {
        const out = [];
        for (let x = a; x < b; x += st) out.push(<rect key={i + "p" + j + "-" + x} x={ox(x)} width="1.500" y={oy(y0)} height={Math.max(1, (y1 - y0) / 3)} fill={c} />);
        return out;
      })
    )}
    <rect x=".5" y=".5" width="1991" height="36" fill="none" stroke="#6c7a84" strokeWidth="1.500" />
  </svg>
);

const bars = [];
for (let b = 1; b <= 125; b += 4) bars.push(b);
const rowHeights = [47, 241, 32, 78, 78, 78, 78, 78, 78, 78, 78, 78, 78, 78, 78, 78, 100, 78];

const Canvas = () => (
  <div className="relative w-[2271px] h-full overflow-hidden shrink-0 bg-[repeating-linear-gradient(90deg,#334450_0_71.76px,#2c3b45_71.76px_143.52px)]">
    <div className="absolute inset-0 bg-[repeating-linear-gradient(90deg,transparent_0_34.880px,#17242c_34.880px_35.880px,transparent_35.880px_70.760px,#0e1a21_70.760px_71.760px)]" />
    <div className="absolute left-0 w-[1px] top-0 bottom-0 bg-[#0e1a21]" />
    <div className="absolute inset-0 flex flex-col">
      {rowHeights.map((h, i) => <div key={i} className="shrink-0 border-b border-[#182730]" style={{ height: h }} />)}
    </div>
    <div className="absolute inset-x-0 top-[32px] h-[15px] bg-[repeating-linear-gradient(180deg,#1a2730_0_1px,transparent_1px_8px)]" />
    <div className="absolute inset-x-0 top-[79px] h-[208px] bg-[repeating-linear-gradient(180deg,#1a2730_0_1px,transparent_1px_8px)]" />

    {lanes.flatMap(([y0, y1, c, xs], i) =>
      xs.map(([a, b], j) => <div key={i + "-" + j} className={"absolute " + c} style={{ left: a - X0, width: b - a, top: y0 - Y0, height: y1 - y0 }} />)
    )}

    {[[1, 25], [25, 33], [33, 41], [41, 49]].map(([a, b]) => (
      <Clip key={"p" + a} x0={bx(a)} x1={bx(b)} top={rowTop.pad} t={T.pad} label="Pad" notes={a === 1 ? pad24 : pad8} />
    ))}
    <Clip x0={bx(77)} x1={bx(85)} top={rowTop.pad} t={T.pad} label="Pad" notes={pad8} />
    {[[1, 25], [25, 33], [33, 41], [41, 49]].map(([a, b]) => (
      <Clip key={"p2" + a} x0={bx(a)} x1={bx(b)} top={rowTop.pad2} t={T.pad} label="Pad 2" notes={a === 1 ? pad24 : pad8} />
    ))}
    {[[1, 25], [25, 33], [33, 41], [41, 49]].map(([a, b]) => (
      <Clip key={"p3" + a} x0={bx(a)} x1={bx(b)} top={rowTop.pad3} t={T.pad} label="Pad 3" notes={a === 1 ? pad3_24 : pad3_8} nh={9} />
    ))}
    <Clip x0={bx(1)} x1={bx(17)} top={rowTop.atm} t={T.atm} label="Atmosphere" notes={[[0, 1, 6]]} nh={4} />

    {[[1, 49], [69, 77], [105, 121]].flatMap(([a, b]) =>
      barClips(a, b, 1, (k) => (
        <Clip key={"s" + k} x0={bx(k) + 0.5} x1={bx(k + 1) - 0.5} top={rowTop.synth} t={T.synth} tiny><div className={synthDash} /></Clip>
      ))
    )}
    {[[25, 49], [69, 77], [105, 121]].flatMap(([a, b]) =>
      barClips(a, b, 1, (k) => (
        <Clip key={"g" + k} x0={bx(k) + 0.5} x1={bx(k + 1) - 0.5} top={rowTop.guit2} t={T.guit2} tiny><div className={g2Dash} /></Clip>
      ))
    )}

    {[[555, 995], [995, 1129], [1129, 1272], [1272, 1429], [1776, 1931]].map(([a, b]) => (
      <Clip key={"gt" + a} x0={a} x1={b} top={rowTop.guit} t={T.guit} label="4 Guitar" audio />
    ))}
    <svg viewBox="0 0 874 50" className="absolute left-0 top-[738px] w-[874px] h-[50px]">
      <path fill="#f7a45c" d={wavePath(868, [[213, 16, 4, 5], [313, 17, 6, 10], [357, 15, 5, 8], [393, 19, 6, 20]], 145, (x) => (x < 440 ? 6 : 4.5), false)} />
      <path d="M868 2 873 50" stroke="#f7a45c" fill="none" />
    </svg>
    <svg viewBox="0 0 155 50" className="absolute left-[1221px] top-[738px] w-[155px] h-[50px]">
      <path fill="#f7a45c" d={wavePath(150, [[24, 16, 7, 10], [69, 15, 7, 9], [106, 17, 8, 14]], 0, () => 6, true)} />
      <path d="M149 2 154 50" stroke="#f7a45c" fill="none" />
    </svg>

    {[[17, 25], [25, 33], [33, 41], [41, 49], [77, 85]].map(([a, b]) => (
      <Clip key={"r" + a} x0={bx(a)} x1={bx(b)} top={rowTop.reese} t={T.reese} label="Bass Reese" notes={reese8} nh={5} />
    ))}
    {[[33, 41], [41, 49], [77, 85]].map(([a, b]) => (
      <Clip key={"st" + a} x0={bx(a)} x1={bx(b)} top={rowTop.str} t={T.str} label="Strings" notes={pad8} />
    ))}
    {[49, 85].map((a) => (
      <React.Fragment key={a}>
        <Clip x0={bx(a)} x1={bx(a + 8)} top={rowTop.reese2} t={T.reese} label="Bass Reese 2" notes={reese8} nh={5} small />
        <Clip x0={bx(a)} x1={bx(a + 8)} top={rowTop.brass} t={T.brass} label="Brass" notes={pad8} />
        <Clip x0={bx(a)} x1={bx(a + 8)} top={rowTop.brass2} t={T.brass} label="Brass 2" notes={pad8} />
      </React.Fragment>
    ))}

    {bassGroup(rowTop.low, "B..w", "Bass Low", 78, [2, 45, [23, 38, 27, 12]], 28)}
    {bassGroup(rowTop.mid, "B..d", "Bass Mid", 100, [3, 63, [33, 54, 37, 17]], 30)}
    {bassGroup(rowTop.mid2, "Ba..", "Bass Mid 2", 48, [3, null, null], 28)}
  </div>
);

const listBg = "bg-[#2e3a42]";

export default function App() {
  return (
    <div className="w-[2880px] h-[1644px] overflow-hidden flex flex-col bg-[#3f474f] font-['DejaVu_Sans_Condensed','DejaVu_Sans',sans-serif] [font-stretch:condensed]">
      {/* top strip */}
      <div className="h-[9px] shrink-0 bg-[#59616a] border-b-2 border-[#2e353c] relative flex">
        <div className="ml-[578px] w-[79px] h-full border-x border-[#474e56]" />
        <div className="ml-[1923px] w-[278px] h-full border-x border-[#474e56]" />
      </div>
      <div className="flex-1 flex min-h-0">
        <div className="w-[16px] shrink-0 bg-[#37414a] border-r border-[#2e353c]" />
        <div className="flex-1 flex flex-col min-w-0">
          {/* toolbar */}
          <div className="h-[56px] shrink-0 flex items-center relative">
            <TopIcons />
            <span className="ml-[14px] text-[25px] leading-none text-[#c9d0d5] whitespace-nowrap">Playlist - Arrangement</span>
            <span className="ml-[8px] w-0 h-0 border-y-[7px] border-y-transparent border-l-[7px] border-l-[#9aa4ab]" />
            <span className="ml-[16px] text-[26px] leading-none text-[#c9d0d5] whitespace-nowrap">789ANG_IMPACT_14</span>
            <span className="ml-[10px] w-0 h-0 border-y-[7px] border-y-transparent border-l-[7px] border-l-[#9aa4ab]" />
            <div className="ml-auto flex items-center gap-[22px] pr-[18px]">
              <div className="w-[15px] h-[5px] bg-[#dfe5e8] -mt-[8px]" />
              <div className="w-[18px] h-[17px] border-[3px] border-t-[6px] border-[#dfe5e8] mt-[2px]" />
              <svg viewBox="0 0 18 20" className="w-[18px] h-[19px] mt-[2px]" fill="none" stroke="#dfe5e8" strokeWidth="3"><path d="M1 1l16 18M17 1 1 19" /></svg>
            </div>
          </div>
          <div className="flex-1 flex min-h-0">
            {/* picker */}
            <div className="w-[305px] shrink-0 flex flex-col">
              <div className="h-[79px] shrink-0 flex items-center pt-[21px] border-b-2 border-[#232b31]">
                <PianoIcon className="w-[32px] h-[31px] ml-[25px] text-[#e6ebee]" />
                <Wave className="w-[40px] h-[28px] ml-[54px]" color="#56606a" />
                <AutoIcon className="w-[32px] h-[30px] ml-[61px] text-[#56606a]" />
              </div>
              <div className="h-[1445px] shrink-0 flex border-b-2 border-[#232b31]">
                <div className={"w-[270px] shrink-0 overflow-hidden flex flex-col gap-[6px] pt-[6px] " + listBg}>
                  {pickerItems.map((it, i) => <PickerItem key={i} it={it} />)}
                </div>
                <div className={"w-[5px] " + listBg} />
                <div className="w-[28px] flex flex-col bg-[#2a3239] gap-[2px] pt-[1px]">
                  <ScrollBtn className="h-[26px]"><div className="w-[3px] h-[10px] bg-[#1f272d]" /></ScrollBtn>
                  <ScrollBtn className="h-[27px]"><Chev dir="up" /></ScrollBtn>
                  <div className="h-[903px] shrink-0 bg-[#4d565e] border-2 border-[#5d666e]" />
                  <div className="flex-1 bg-[repeating-linear-gradient(45deg,#3a4148_0_1px,#454c54_1px_2px)]" />
                  <ScrollBtn className="h-[27px]"><Chev dir="down" /></ScrollBtn>
                </div>
                <div className="w-[2px] bg-[#232b31]" />
              </div>
              <div className="flex-1 flex items-start justify-center pt-[15px] pr-[34px]">
                <svg viewBox="0 0 16 16" className="w-[16px] h-[16px]"><path fill="#a9b7c0" d="M6 0h4v6h6v4h-6v6H6v-6H0V6h6z" /></svg>
              </div>
            </div>
            <div className="w-[10px] shrink-0" />
            {/* arrangement */}
            <div className="w-[2535px] shrink-0 flex flex-col">
              <div className="h-[81px] shrink-0 flex">
                <div className="w-[61px] h-[79px] shrink-0 bg-[#2a333a] [clip-path:polygon(34%_0,100%_0,100%_100%,0_100%,0_75%)] flex items-end justify-center pb-[3px]">
                  <div className="w-[57px] h-[75px] bg-[#4e5860] ml-[2px] [clip-path:polygon(36%_0,100%_0,100%_100%,0_100%,0_75%)] flex items-end justify-center pb-[15px]">
                    <svg viewBox="0 0 16 16" className="w-[16px] h-[16px] ml-[10px]"><path fill="#eef2f4" d="M6 0h4v6h6v4h-6v6H6v-6H0V6h6z" /></svg>
                  </div>
                </div>
                <div className="w-[159px] h-[79px] shrink-0 ml-[2px] bg-[#4e5860] border-2 border-[#2a333a] grid grid-cols-3 place-items-center py-[2px]">
                  <Wave className="w-[40px] h-[28px]" />
                  <AutoIcon className="w-[32px] h-[28px] text-[#6a747c]" />
                  <PianoIcon className="w-[30px] h-[25px] text-[#6a747c]" />
                  <svg viewBox="0 0 18 22" className="w-[18px] h-[21px]" fill="none" stroke="#f2f5f6" strokeWidth="3"><path d="M1 1l16 20M17 1 1 21" /></svg>
                  <svg viewBox="0 0 20 24" className="w-[19px] h-[24px]" fill="none" stroke="#7c868e" strokeWidth="2"><path d="M5 23C9 20 9 4 16 1M1 14h16M5 6v14" /></svg>
                  <svg viewBox="0 0 22 16" className="w-[20px] h-[14px]" fill="#7c868e"><path d="M0 8 7 1v14ZM22 8 15 1v14ZM9 4h1.500v8H9ZM12 4h1.500v8H12Z" /></svg>
                </div>
                <div className="flex-1 flex flex-col min-w-0">
                  <div className="h-[38px] pt-[1px] shrink-0 flex">
                    <div className="w-[38px] h-[37px] bg-[#4d565e] border-2 border-[#5d666e] flex items-center justify-center shrink-0 ml-[1px]">
                      <svg viewBox="0 0 10 20" className="w-[10px] h-[20px]" fill="none" stroke="#222b31" strokeWidth="2"><path d="M9 1 1 10l8 9" /></svg>
                    </div>
                    <div className="ml-[3px] shrink-0"><Overview /></div>
                    <div className="flex-1" />
                    <div className="w-[38px] h-[37px] bg-[#4d565e] border-2 border-[#5d666e] flex items-center justify-center shrink-0">
                      <svg viewBox="0 0 10 20" className="w-[10px] h-[20px]" fill="none" stroke="#222b31" strokeWidth="2"><path d="M1 1l8 9-8 9" /></svg>
                    </div>
                    <ScrollBtn className="w-[38px] h-[37px] ml-[2px]"><div className="w-[3px] h-[5px] bg-[#1f272d]" /></ScrollBtn>
                  </div>
                  <div className="flex-1 flex bg-[#2d363d] pt-[3px]">
                    <div className="w-[2271px] h-[37px] ml-[2px] shrink-0 bg-[#1e2c34] flex relative pt-[2px]">
                      <svg viewBox="0 0 16 18" className="absolute left-0 top-[2px] w-[16px] h-[18px]"><path fill="#a6d84a" d="M0 0H16L10 11 0 18Z" /></svg>
                      {bars.map((b) => (
                        <div key={b} className="w-[71.76px] shrink-0 text-[20px] leading-[33px] text-[#8fa3b0] pl-[1px]">{b}</div>
                      ))}
                    </div>
                    <ScrollBtn className="w-[38px] h-[37px] ml-[2px]"><Chev dir="up" /></ScrollBtn>
                  </div>
                </div>
              </div>
              <div className="h-[1484px] shrink-0 flex border-b-2 border-[#1c2329]">
                {heads}
                <div className="w-[22px] shrink-0 relative bg-[#2c3a42] border-l-2 border-[#252f36]">
                  <div className="absolute inset-x-0 top-[32px] h-[15px] bg-[repeating-linear-gradient(180deg,#1e2a32_0_1px,transparent_1px_8px)]" />
                  <div className="absolute inset-x-0 top-[79px] h-[208px] bg-[repeating-linear-gradient(180deg,#1e2a32_0_1px,transparent_1px_8px)]" />
                  <div className="absolute left-0 right-[2px] top-[290px] h-[28px] border-2 border-[#a8d838] rounded-[2px]" />
                  <div className="absolute inset-0 flex flex-col">
                    {rowHeights.map((h, i) => <div key={i} className="shrink-0 border-b border-[#1e2a32]" style={{ height: h }} />)}
                  </div>
                </div>
                <Canvas />
                <div className="w-[2px] shrink-0" />
                <div className="w-[38px] shrink-0 flex flex-col gap-[2px] pt-[1px] pb-[1px] bg-[#2d363d]">
                  <div className="h-[65px] shrink-0 bg-[#4d565e] border-2 border-[#5d666e]" />
                  <div className="flex-1 bg-[repeating-linear-gradient(45deg,#3a4148_0_1px,#454c54_1px_2px)]" />
                  <ScrollBtn className="h-[37px]"><Chev dir="down" /></ScrollBtn>
                </div>
              </div>
            </div>
          </div>
        </div>
      </div>
    </div>
  );
}
